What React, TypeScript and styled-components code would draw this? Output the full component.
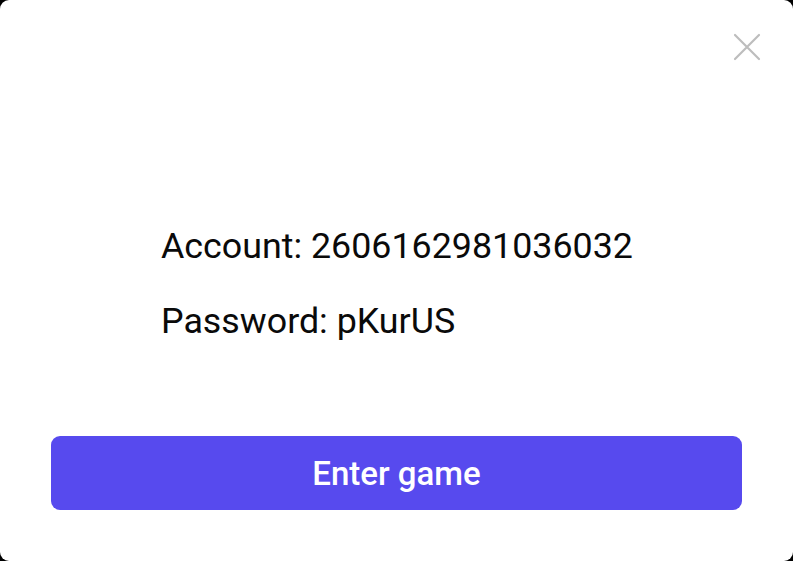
import styled, { createGlobalStyle } from 'styled-components';

const GlobalStyle = createGlobalStyle`
  html, body {
    margin: 0;
    padding: 0;
    background: #000;
  }
  body {
    font-family: Roboto, "Liberation Sans", sans-serif;
  }
`;

const Card = styled.div`
  width: 793px;
  height: 561px;
  box-sizing: border-box;
  background: #fff;
  border-radius: 9px;
  position: relative;
  display: flex;
  flex-direction: column;
  padding: 0 51px 51px;
`;

const CloseButton = styled.button`
  position: absolute;
  top: 32px;
  right: 31px;
  width: 30px;
  height: 30px;
  padding: 0;
  border: none;
  background: transparent;
  cursor: pointer;
  display: flex;
  align-items: center;
  justify-content: center;
`;

const Info = styled.div`
  flex: 1;
  display: flex;
  flex-direction: column;
  gap: 35px;
  padding: 226px 0 0 110px;
`;

const Line = styled.p`
  margin: 0;
  font-size: 35.8px;
  line-height: 40px;
  color: #0a0a0a;
  font-weight: 400;
`;

const EnterButton = styled.button`
  width: 100%;
  height: 74px;
  border: none;
  border-radius: 9px;
  background: #574aee;
  color: #fff;
  font-family: Roboto, "Liberation Sans", sans-serif;
  font-size: 33px;
  font-weight: 500;
  cursor: pointer;
`;

export default function App() {
  return (
    <>
      <GlobalStyle />
      <Card>
        <CloseButton aria-label="Close">
          <svg width="28" height="28" viewBox="0 0 28 28">
            <path d="M2 2 L26 26 M26 2 L2 26" stroke="#bdbdbd" strokeWidth="2.2" strokeLinecap="round" />
          </svg>
        </CloseButton>
        <Info>
          <Line>Account: 2606162981036032</Line>
          <Line>Password: pKurUS</Line>
        </Info>
        <EnterButton>Enter game</EnterButton>
      </Card>
    </>
  );
}
